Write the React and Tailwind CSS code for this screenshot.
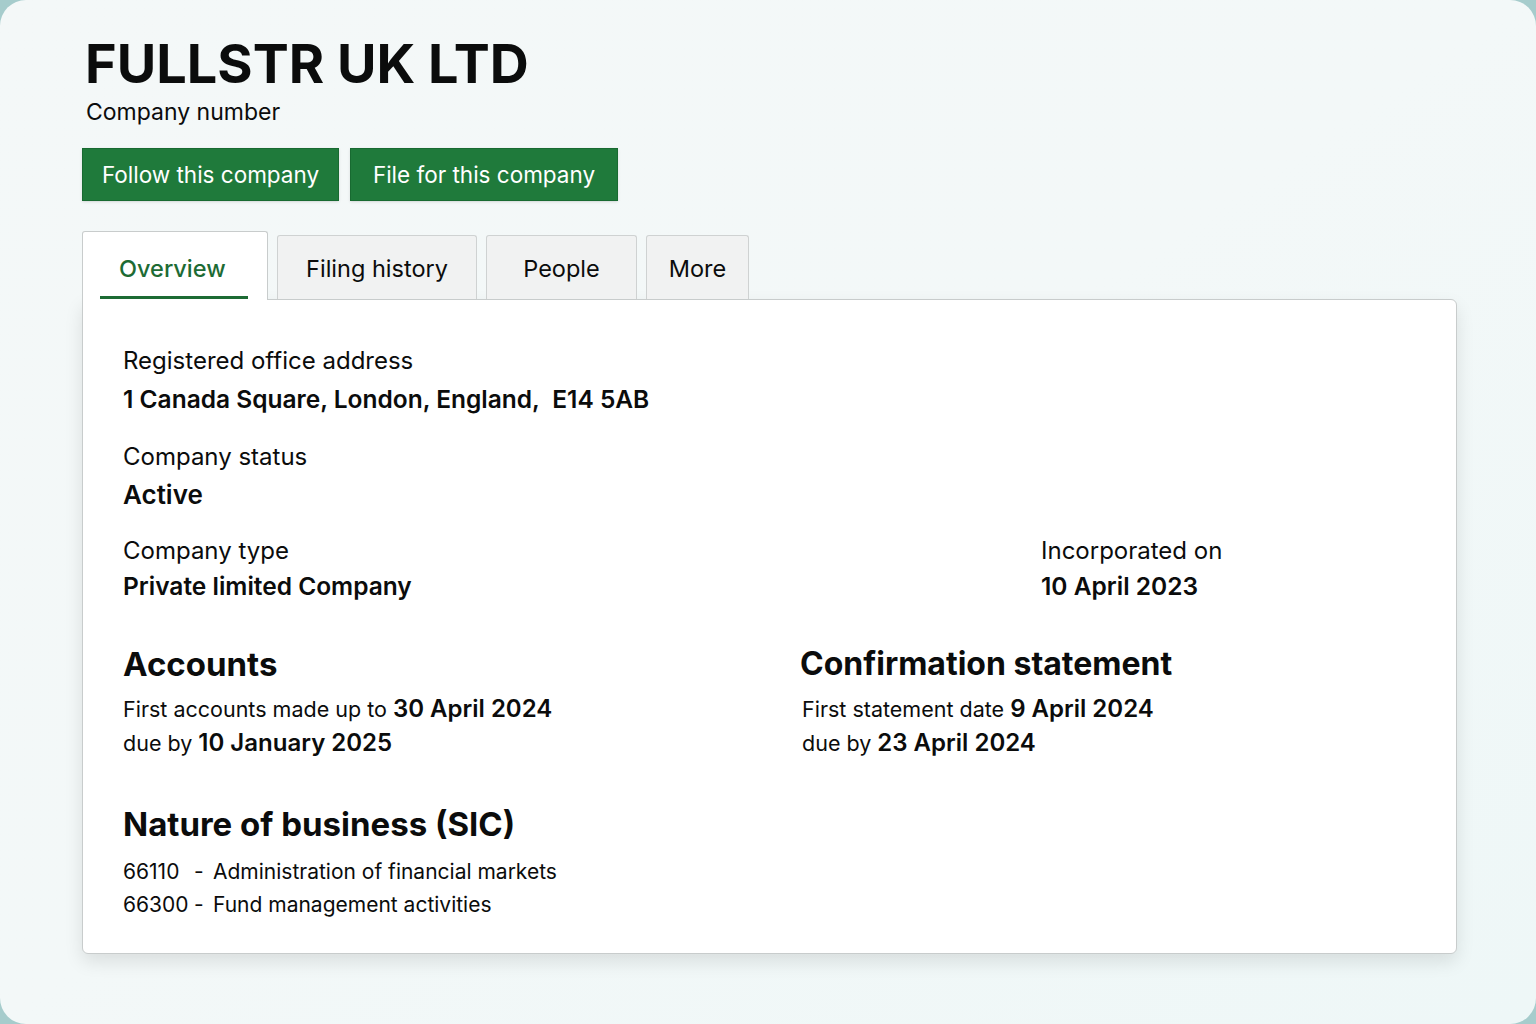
import React from "react";

const sic = [
  ["66110", "Administration of financial markets"],
  ["66300", "Fund management activities"],
];

export default function App() {
  return (
    <div className="h-[1024px] w-full bg-[#a6cccc]" style={{ fontFamily: "Inter, 'Noto Sans', sans-serif" }}>
      <div className="h-full w-full rounded-[26px] bg-gradient-to-br from-[#f4f8f8] via-[#f3f8f8] to-[#eef7f7] pt-[35px] pl-[82px] pr-[80px]">
        {/* Header */}
        <h1 className="pl-[3px] text-[54px] leading-[58px] font-bold text-[#0b0c0c]">FULLSTR UK LTD</h1>
        <div className="pl-[4px] mt-[4px] text-[23px] leading-[30px] text-[#0b0c0c]">Company number</div>

        <div className="mt-[21px] flex gap-[11px]">
          <button className="h-[53px] w-[257px] bg-[#1f7a3b] border border-[#186a31] text-white text-[22.5px] shadow-sm">
            Follow this company
          </button>
          <button className="h-[53px] w-[268px] bg-[#1f7a3b] border border-[#186a31] text-white text-[22.5px] shadow-sm">
            File for this company
          </button>
        </div>

        {/* Tabs */}
        <div className="mt-[30px] flex items-end gap-[9px]">
          <div className="relative -mb-px z-10 h-[69px] w-[186px] bg-white border border-b-0 border-[#c8cccc] rounded-t-[3px] flex items-center pl-[36px] pt-[5px] text-[23.5px] font-medium text-[#1d6b34]">
            Overview
            <div className="absolute left-[17px] bottom-[1px] h-[3px] w-[148px] bg-[#1d6b34]"></div>
          </div>
          <div className="h-[64px] w-[200px] bg-[#f1f2f2] border border-b-0 border-[#cfd2d2] rounded-t-[3px] flex items-center justify-center pt-[2px] text-[23.5px] text-[#0b0c0c]">
            Filing history
          </div>
          <div className="h-[64px] w-[151px] bg-[#f1f2f2] border border-b-0 border-[#cfd2d2] rounded-t-[3px] flex items-center justify-center pt-[2px] text-[23.5px] text-[#0b0c0c]">
            People
          </div>
          <div className="h-[64px] w-[103px] bg-[#f1f2f2] border border-b-0 border-[#cfd2d2] rounded-t-[3px] flex items-center justify-center pt-[2px] text-[23.5px] text-[#0b0c0c]">
            More
          </div>
        </div>

        {/* Panel */}
        <div className="h-[655px] w-[1375px] bg-white border border-[#c8cccc] rounded-b-[6px] rounded-tr-[6px] shadow-[0_8px_18px_rgba(0,0,0,0.10)] pl-[40px] pr-[40px] pt-[46px] text-[#0b0c0c]">
          <div className="text-[24px] leading-[30px]">Registered office address</div>
          <div className="mt-[6px] text-[24.5px] leading-[34px] font-semibold">1 Canada Square, London, England,&nbsp; E14 5AB</div>

          <div className="mt-[26px] text-[24px] leading-[30px]">Company status</div>
          <div className="mt-[6px] text-[26px] leading-[34px] font-semibold">Active</div>

          <div className="mt-[24px] flex">
            <div className="w-[918px]">
              <div className="text-[24px] leading-[30px]">Company type</div>
              <div className="mt-[3px] text-[24.5px] leading-[34px] font-semibold">Private limited Company</div>
            </div>
            <div>
              <div className="text-[24px] leading-[30px]">Incorporated on</div>
              <div className="mt-[3px] text-[24.5px] leading-[34px] font-semibold">10 April 2023</div>
            </div>
          </div>

          <div className="mt-[41px] flex">
            <div className="w-[677px]">
              <h2 className="text-[33px] leading-[40px] font-bold">Accounts</h2>
              <div className="mt-[8px] text-[21.5px] leading-[34px]">
                First accounts made up to <span className="font-semibold text-[24px]">30 April 2024</span>
                <br />
                due by <span className="font-semibold text-[24px]">10 January 2025</span>
              </div>
            </div>
            <div>
              <h2 className="text-[32px] leading-[40px] font-bold">Confirmation statement</h2>
              <div className="mt-[8px] pl-[2px] text-[21.5px] leading-[34px]">
                First statement date <span className="font-semibold text-[24px]">9 April 2024</span>
                <br />
                due by <span className="font-semibold text-[24px]">23 April 2024</span>
              </div>
            </div>
          </div>

          <h2 className="mt-[44px] text-[33px] leading-[40px] font-bold">Nature of business (SIC)</h2>
          <div className="mt-[11px] text-[21px] leading-[33px]">
            {sic.map(([code, desc]) => (
              <div key={code} className="flex">
                <span className="w-[71px]">{code}</span>
                <span className="w-[19px]">-</span>
                <span>{desc}</span>
              </div>
            ))}
          </div>
        </div>
      </div>
    </div>
  );
}
